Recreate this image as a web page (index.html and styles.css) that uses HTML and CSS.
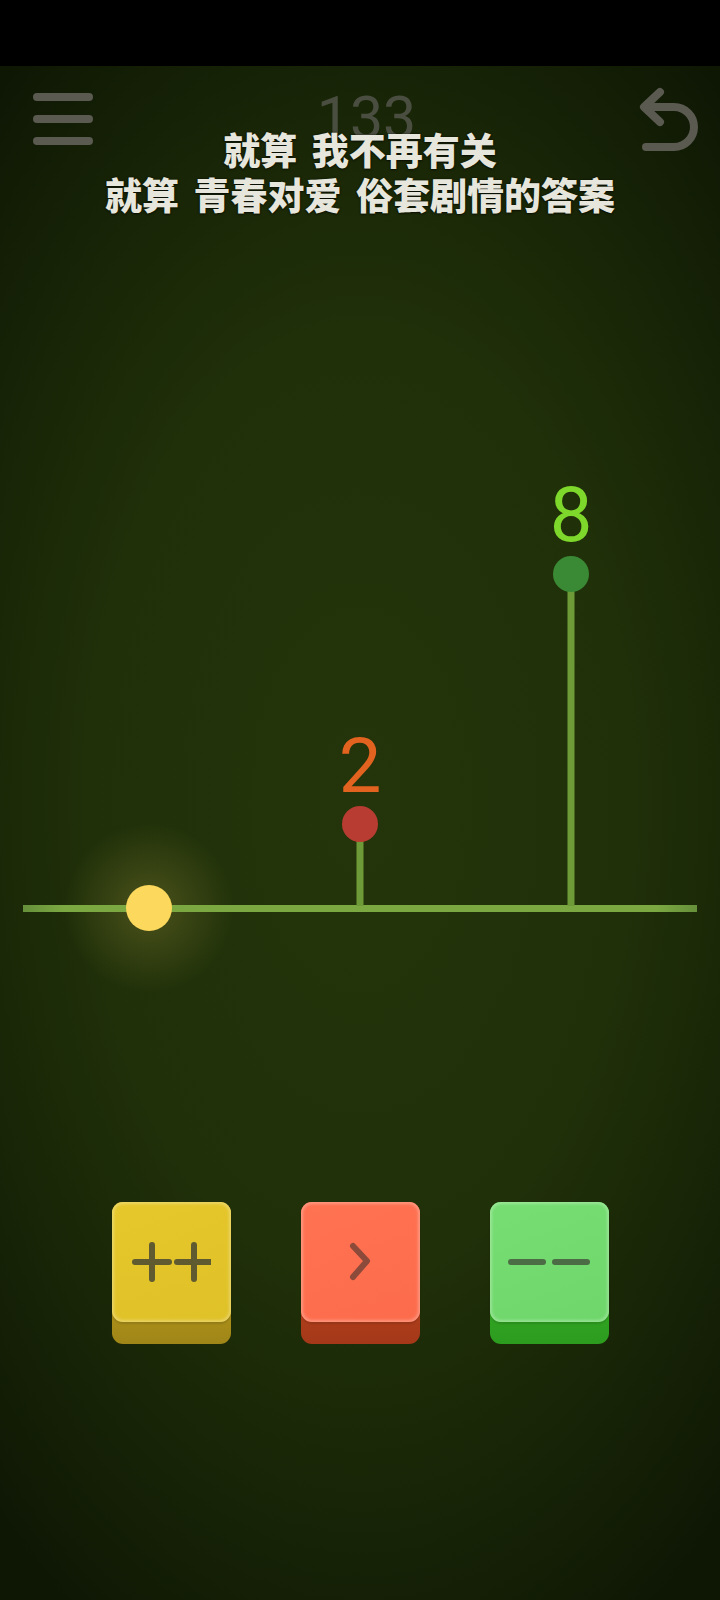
FILE: index.html
```html
<!DOCTYPE html>
<html lang="zh-CN">
<head>
    <meta charset="UTF-8">
    <meta name="viewport" content="width=device-width, initial-scale=1.0">
    <title>133</title>
    <link rel="stylesheet" href="styles.css">
</head>
<body>
    <div class="status-bar"></div>

    <div class="game">
        <div class="topbar">
            <button class="icon-btn menu" title="菜单">
                <svg width="64" height="56" viewBox="0 0 64 56">
                    <g stroke="#5a5a50" stroke-width="8" stroke-linecap="round">
                        <line x1="6" y1="6" x2="58" y2="6"/>
                        <line x1="6" y1="28" x2="58" y2="28"/>
                        <line x1="6" y1="50" x2="58" y2="50"/>
                    </g>
                </svg>
            </button>
            <div class="score">133</div>
            <button class="icon-btn undo" title="撤销">
                <svg width="66" height="68" viewBox="0 0 66 68">
                    <g fill="none" stroke="#5a5a50" stroke-width="8" stroke-linecap="round" stroke-linejoin="round">
                        <path d="M24 6 L8 21 L24 36"/>
                        <path d="M9 21 H38 A20 20 0 0 1 38 61 H10"/>
                    </g>
                </svg>
            </button>
        </div>

        <!-- subtitle over the header -->
        <div class="lyrics">
            <p>就算 我不再有关</p>
            <p>就算 青春对爱 俗套剧情的答案</p>
        </div>

        <div class="board">
            <svg width="720" height="560" viewBox="0 0 720 560">
                <defs>
                    <radialGradient id="glow">
                        <stop offset="0" stop-color="#f6d862" stop-opacity="0.2"/>
                        <stop offset="1" stop-color="#f6d862" stop-opacity="0"/>
                    </radialGradient>
                    <linearGradient id="axis" gradientUnits="userSpaceOnUse" x1="23" y1="0" x2="697" y2="0">
                        <stop offset="0" stop-color="#66903a"/>
                        <stop offset="0.06" stop-color="#7ca842"/>
                        <stop offset="0.94" stop-color="#7ca842"/>
                        <stop offset="1" stop-color="#66903a"/>
                    </linearGradient>
                </defs>

                <circle cx="149" cy="448" r="85" fill="url(#glow)"/>

                <line x1="23" y1="448.5" x2="697" y2="448.5" stroke="url(#axis)" stroke-width="7"/>

                <line x1="360" y1="364" x2="360" y2="446" stroke="#6e9b37" stroke-width="7"/>
                <circle cx="360" cy="364" r="18" fill="#b83c32"/>
                <text class="num" x="360" y="332" fill="#e2621f">2</text>

                <line x1="571" y1="114" x2="571" y2="446" stroke="#6e9b37" stroke-width="7"/>
                <circle cx="571" cy="114" r="18" fill="#3a8a35"/>
                <text class="num" x="571" y="81" fill="#7ed82c">8</text>

                <circle cx="149" cy="448" r="23" fill="#fcd95c"/>
            </svg>
        </div>

        <div class="controls">
            <div class="key yellow" title="++">
                <div class="key-face">
                    <svg width="80" height="40" viewBox="0 0 80 40">
                        <g stroke="#5f5a30" stroke-width="6" stroke-linecap="round">
                            <line x1="4" y1="20" x2="38" y2="20"/>
                            <line x1="21" y1="3" x2="21" y2="37"/>
                            <line x1="46" y1="20" x2="80" y2="20"/>
                            <line x1="63" y1="3" x2="63" y2="37"/>
                        </g>
                    </svg>
                </div>
            </div>
            <div class="key red" title="下一步">
                <div class="key-face">
                    <svg width="40" height="40" viewBox="0 0 40 40">
                        <path d="M13 4 L27 19 L13 35" fill="none" stroke="#8c4a3a" stroke-width="6" stroke-linecap="round" stroke-linejoin="round"/>
                    </svg>
                </div>
            </div>
            <div class="key green" title="--">
                <div class="key-face">
                    <svg width="84" height="20" viewBox="0 0 84 20">
                        <g stroke="#4b6c45" stroke-width="6" stroke-linecap="round">
                            <line x1="4" y1="10" x2="36" y2="10"/>
                            <line x1="48" y1="10" x2="80" y2="10"/>
                        </g>
                    </svg>
                </div>
            </div>
        </div>
    </div>
</body>
</html>
```

FILE: styles.css
```css
body {
    margin: 0;
    width: 720px;
    height: 1600px;
    background-color: #000;
    font-family: Roboto, "Noto Sans", sans-serif;
    overflow: hidden;
}

.status-bar {
    height: 66px;
    background-color: #000;
}

.game {
    position: relative;
    height: 1534px;
    display: flex;
    flex-direction: column;
    background: radial-gradient(ellipse 76% 62% at 50% 48%, #24350b 0%, #203009 50%, #162206 80%, #0e1704 100%);
}

.topbar {
    display: grid;
    grid-template-columns: 1fr auto 1fr;
    align-items: start;
    padding: 20px 18px 0 31px;
    height: 110px;
    box-sizing: border-box;
}

.icon-btn {
    background: none;
    border: none;
    padding: 0;
    cursor: pointer;
    line-height: 0;
}

.icon-btn.menu {
    justify-self: start;
    margin-top: 5px;
}

.icon-btn.undo {
    justify-self: end;
}

.score {
    font-size: 59px;
    font-weight: 400;
    line-height: 60px;
    color: #4a4e40;
    margin-top: 2px;
}

.lyrics {
    position: absolute;
    top: 61px;
    left: 0;
    right: 0;
    text-align: center;
}

.lyrics p {
    margin: 0;
    font-family: "Noto Sans CJK SC", "Noto Sans", sans-serif;
    font-size: 37px;
    font-weight: 900;
    line-height: 45px;
    word-spacing: 6px;
    color: #e6e6dc;
    text-shadow: 0 0 2px rgba(0, 0, 0, 0.7), 0 1px 2px rgba(0, 0, 0, 0.5);
}

.board {
    margin-top: 284px;
    height: 500px;
    line-height: 0;
}

.board .num {
    font-family: Roboto, sans-serif;
    font-size: 76px;
    text-anchor: middle;
}

.controls {
    display: flex;
    justify-content: center;
    gap: 70px;
    margin-top: 242px;
}

.key {
    width: 119px;
    height: 142px;
    border-radius: 11px;
    cursor: pointer;
}

.key-face {
    height: 120px;
    border-radius: 11px;
    display: flex;
    align-items: center;
    justify-content: center;
    box-shadow: inset 0 0 3px 2px rgba(255, 255, 255, 0.28), 0 2px 2px rgba(0, 0, 0, 0.12);
}

.key.yellow {
    background: linear-gradient(#d2b020, #a08618);
}

.key.yellow .key-face {
    background: linear-gradient(160deg, #e6c82c, #dfc128);
}

.key.red {
    background: linear-gradient(#d4542a, #a43818);
}

.key.red .key-face {
    background: linear-gradient(160deg, #ff7252, #fc6c4c);
}

.key.green {
    background: linear-gradient(#40bf2c, #2c9c1f);
}

.key.green .key-face {
    background: linear-gradient(160deg, #76de72, #6ed66a);
}
```
